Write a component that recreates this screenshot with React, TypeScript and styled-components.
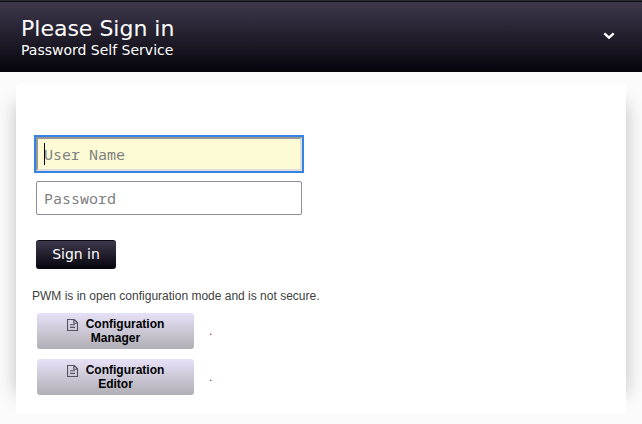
import React from "react";
import styled, { createGlobalStyle } from "styled-components";

const GlobalStyle = createGlobalStyle`
  * { box-sizing: border-box; }
  body { margin: 0; background: #fbfbfb; overflow: hidden; font-family: "Liberation Sans", Arial, sans-serif; }
`;

const Page = styled.div`
  height: 424px;
  overflow: hidden;
`;

const Header = styled.header`
  display: flex;
  justify-content: space-between;
  height: 72px;
  padding: 15px 27px 0 21px;
  border-top: 1px solid #2b2933;
  background: linear-gradient(to bottom, #0d0c12 1px, #3f384d 1px, #05040b);
  color: #fff;
  font-family: "DejaVu Sans", sans-serif;
`;

const Title = styled.h1`
  margin: 0;
  font-size: 22px;
  line-height: 26px;
  font-weight: 400;
`;

const Subtitle = styled.div`
  font-size: 14px;
  line-height: 17px;
`;

const Chevron = styled.svg`
  display: block;
  width: 12px;
  height: 8px;
  margin-top: 16px;
`;

const Panel = styled.main`
  width: 610px;
  height: 331px;
  margin: 11px 0 0 16px;
  padding: 54px 16px 0;
  border-radius: 4px;
  background: #fff;
  box-shadow: 20px 0 18px -20px rgba(0, 0, 0, 0.24), -20px 0 18px -20px rgba(0, 0, 0, 0.24);
`;

const Form = styled.form`
  display: flex;
  flex-direction: column;
  align-items: flex-start;
  padding-left: 4px;
`;

const Field = styled.input`
  width: 266px;
  height: 34px;
  margin: 0 0 10px;
  padding: 0 7px;
  border: 1px solid #8f8b9b;
  border-radius: 2px;
  background: #fff;
  color: #222;
  font-family: "Noto Sans Mono", "DejaVu Sans Mono", monospace;
  font-size: 15px;
  &::placeholder { color: #808080; opacity: 1; }
`;

const ActiveField = styled(Field)`
  padding: 0 6px;
  border: 2px solid;
  border-color: #999693 #dfdddc #dfdddc #999693;
  border-radius: 0;
  background: #fcfbd6;
  outline: none;
  box-shadow: 0 0 0 2px #3584e4;
`;

const FieldFrame = styled.div`
  position: relative;
  height: 44px;
`;

const Caret = styled.span`
  position: absolute;
  left: 8px;
  top: 6px;
  width: 1px;
  height: 22px;
  background: #000;
`;

const SignIn = styled.button`
  width: 80px;
  height: 29px;
  margin: 15px 0 0;
  padding: 0 0 2px;
  border: 0;
  border-top: 1px solid #0b0912;
  border-radius: 3px;
  background: linear-gradient(to bottom, #3f384d, #05040b);
  color: #fff;
  font: 14px "DejaVu Sans", sans-serif;
`;

const Notice = styled.p`
  margin: 20px 0 10px;
  color: #404040;
  font-size: 12px;
  line-height: 14px;
`;

const ConfigRow = styled.div`
  display: flex;
  align-items: center;
  gap: 15px;
  height: 36px;
  margin: 0 0 10px 5px;
  color: #6e3535;
  font-size: 12px;
`;

const ConfigButton = styled.button`
  width: 157px;
  height: 36px;
  padding: 0 28px;
  border: 0;
  border-radius: 3px;
  background: linear-gradient(to bottom, #e7e1f7, #b0aeb5);
  color: #000;
  font: bold 12px/14px "Liberation Sans", Arial, sans-serif;
  text-align: center;
`;

const FileGlyph = styled.svg`
  display: inline-block;
  width: 12px;
  height: 12px;
  margin-right: 7px;
  vertical-align: -3px;
`;

function ConfigLink({ label }: { label: string }) {
  return (
    <ConfigRow>
      <ConfigButton type="button">
        <FileGlyph viewBox="0 0 12 12" fill="none" stroke="#57525f" aria-hidden="true">
          <path d="M.5.5h6.7l3.3 3.3v7.7H.5zM6.8.5v3.7h3.7M3 5.7h5M3 8.3h5" strokeWidth="1.15" />
        </FileGlyph>
        {label}
      </ConfigButton>
      <span>.</span>
    </ConfigRow>
  );
}

export default function App() {
  return (
    <Page>
      <GlobalStyle />
      <Header>
        <div>
          <Title>Please Sign in</Title>
          <Subtitle>Password Self Service</Subtitle>
        </div>
        <Chevron viewBox="0 0 12 8" fill="none" stroke="#fff" strokeWidth="2.4" aria-hidden="true">
          <path d="M1.3 1.3 6 5.6l4.7-4.3" />
        </Chevron>
      </Header>
      <Panel>
        <Form onSubmit={(event) => event.preventDefault()}>
          <FieldFrame>
            <ActiveField placeholder="User Name" />
            <Caret />
          </FieldFrame>
          <Field type="password" placeholder="Password" />
          <SignIn type="submit">Sign in</SignIn>
        </Form>
        <Notice>PWM is in open configuration mode and is not secure.</Notice>
        <ConfigLink label="Configuration Manager" />
        <ConfigLink label="Configuration Editor" />
      </Panel>
    </Page>
  );
}
